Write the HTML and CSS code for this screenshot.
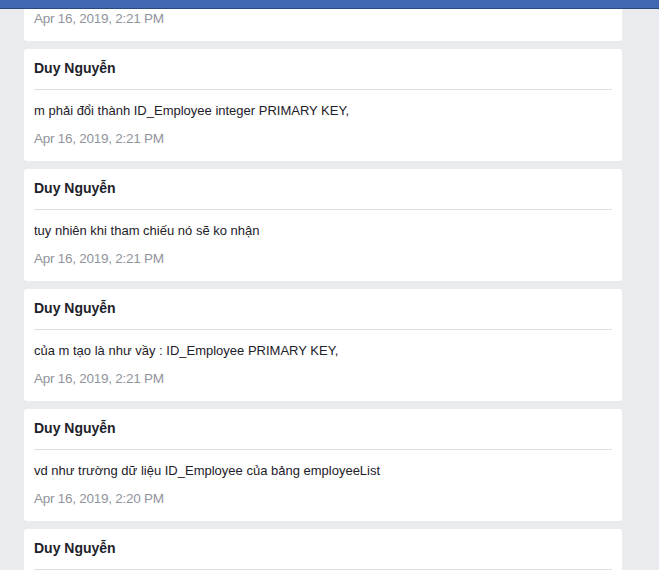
FILE: index.html
```html
<!DOCTYPE html>
<html lang="vi">
<head>
<meta charset="utf-8">
<title>Messages</title>
<link rel="stylesheet" href="styles.css">
</head>
<body>
<div class="topbar"></div>
<main class="feed">
  <article class="card">
    <div class="name">Duy Nguyễn</div>
    <p class="msg">ok</p>
    <div class="time">Apr 16, 2019, 2:21 PM</div>
  </article>
  <article class="card">
    <div class="name">Duy Nguyễn</div>
    <p class="msg">m phải đổi thành ID_Employee integer PRIMARY KEY,</p>
    <div class="time">Apr 16, 2019, 2:21 PM</div>
  </article>
  <article class="card">
    <div class="name">Duy Nguyễn</div>
    <p class="msg">tuy nhiên khi tham chiếu nó sẽ ko nhận</p>
    <div class="time">Apr 16, 2019, 2:21 PM</div>
  </article>
  <article class="card">
    <div class="name">Duy Nguyễn</div>
    <p class="msg">của m tạo là như vầy : ID_Employee PRIMARY KEY,</p>
    <div class="time">Apr 16, 2019, 2:21 PM</div>
  </article>
  <article class="card">
    <div class="name">Duy Nguyễn</div>
    <p class="msg">vd như trường dữ liệu ID_Employee của bảng employeeList</p>
    <div class="time">Apr 16, 2019, 2:20 PM</div>
  </article>
  <article class="card">
    <div class="name">Duy Nguyễn</div>
    <p class="msg">ok</p>
    <div class="time">Apr 16, 2019, 2:20 PM</div>
  </article>
</main>
</body>
</html>
```
FILE: styles.css
```css
html, body {
  margin: 0;
  padding: 0;
  background: #e9ebee;
  font-family: "Liberation Sans", Arial, Helvetica, sans-serif;
  color: #1d2129;
  overflow: hidden;
}
.topbar {
  position: fixed;
  top: 0;
  left: 0;
  right: 0;
  height: 8px;
  background: #4267b2;
  border-bottom: 1px solid #29487d;
  z-index: 2;
}
.feed {
  display: flex;
  flex-direction: column;
  gap: 8px;
  width: 598px;
  margin: -71px 0 0 24px;
}
.card {
  background: #fff;
  border-radius: 3px;
  padding: 11px 10px 14px;
  height: 112px;
  box-sizing: border-box;
  flex-shrink: 0;
}
.name {
  font-size: 14px;
  font-weight: bold;
  line-height: 16px;
  padding-bottom: 13px;
  border-bottom: 1px solid #dddfe2;
}
.msg {
  margin: 12px 0 0;
  font-size: 13px;
  line-height: 17px;
}
.time {
  margin-top: 11px;
  font-size: 13.5px;
  line-height: 17px;
  letter-spacing: -0.25px;
  color: #90949c;
}
```
